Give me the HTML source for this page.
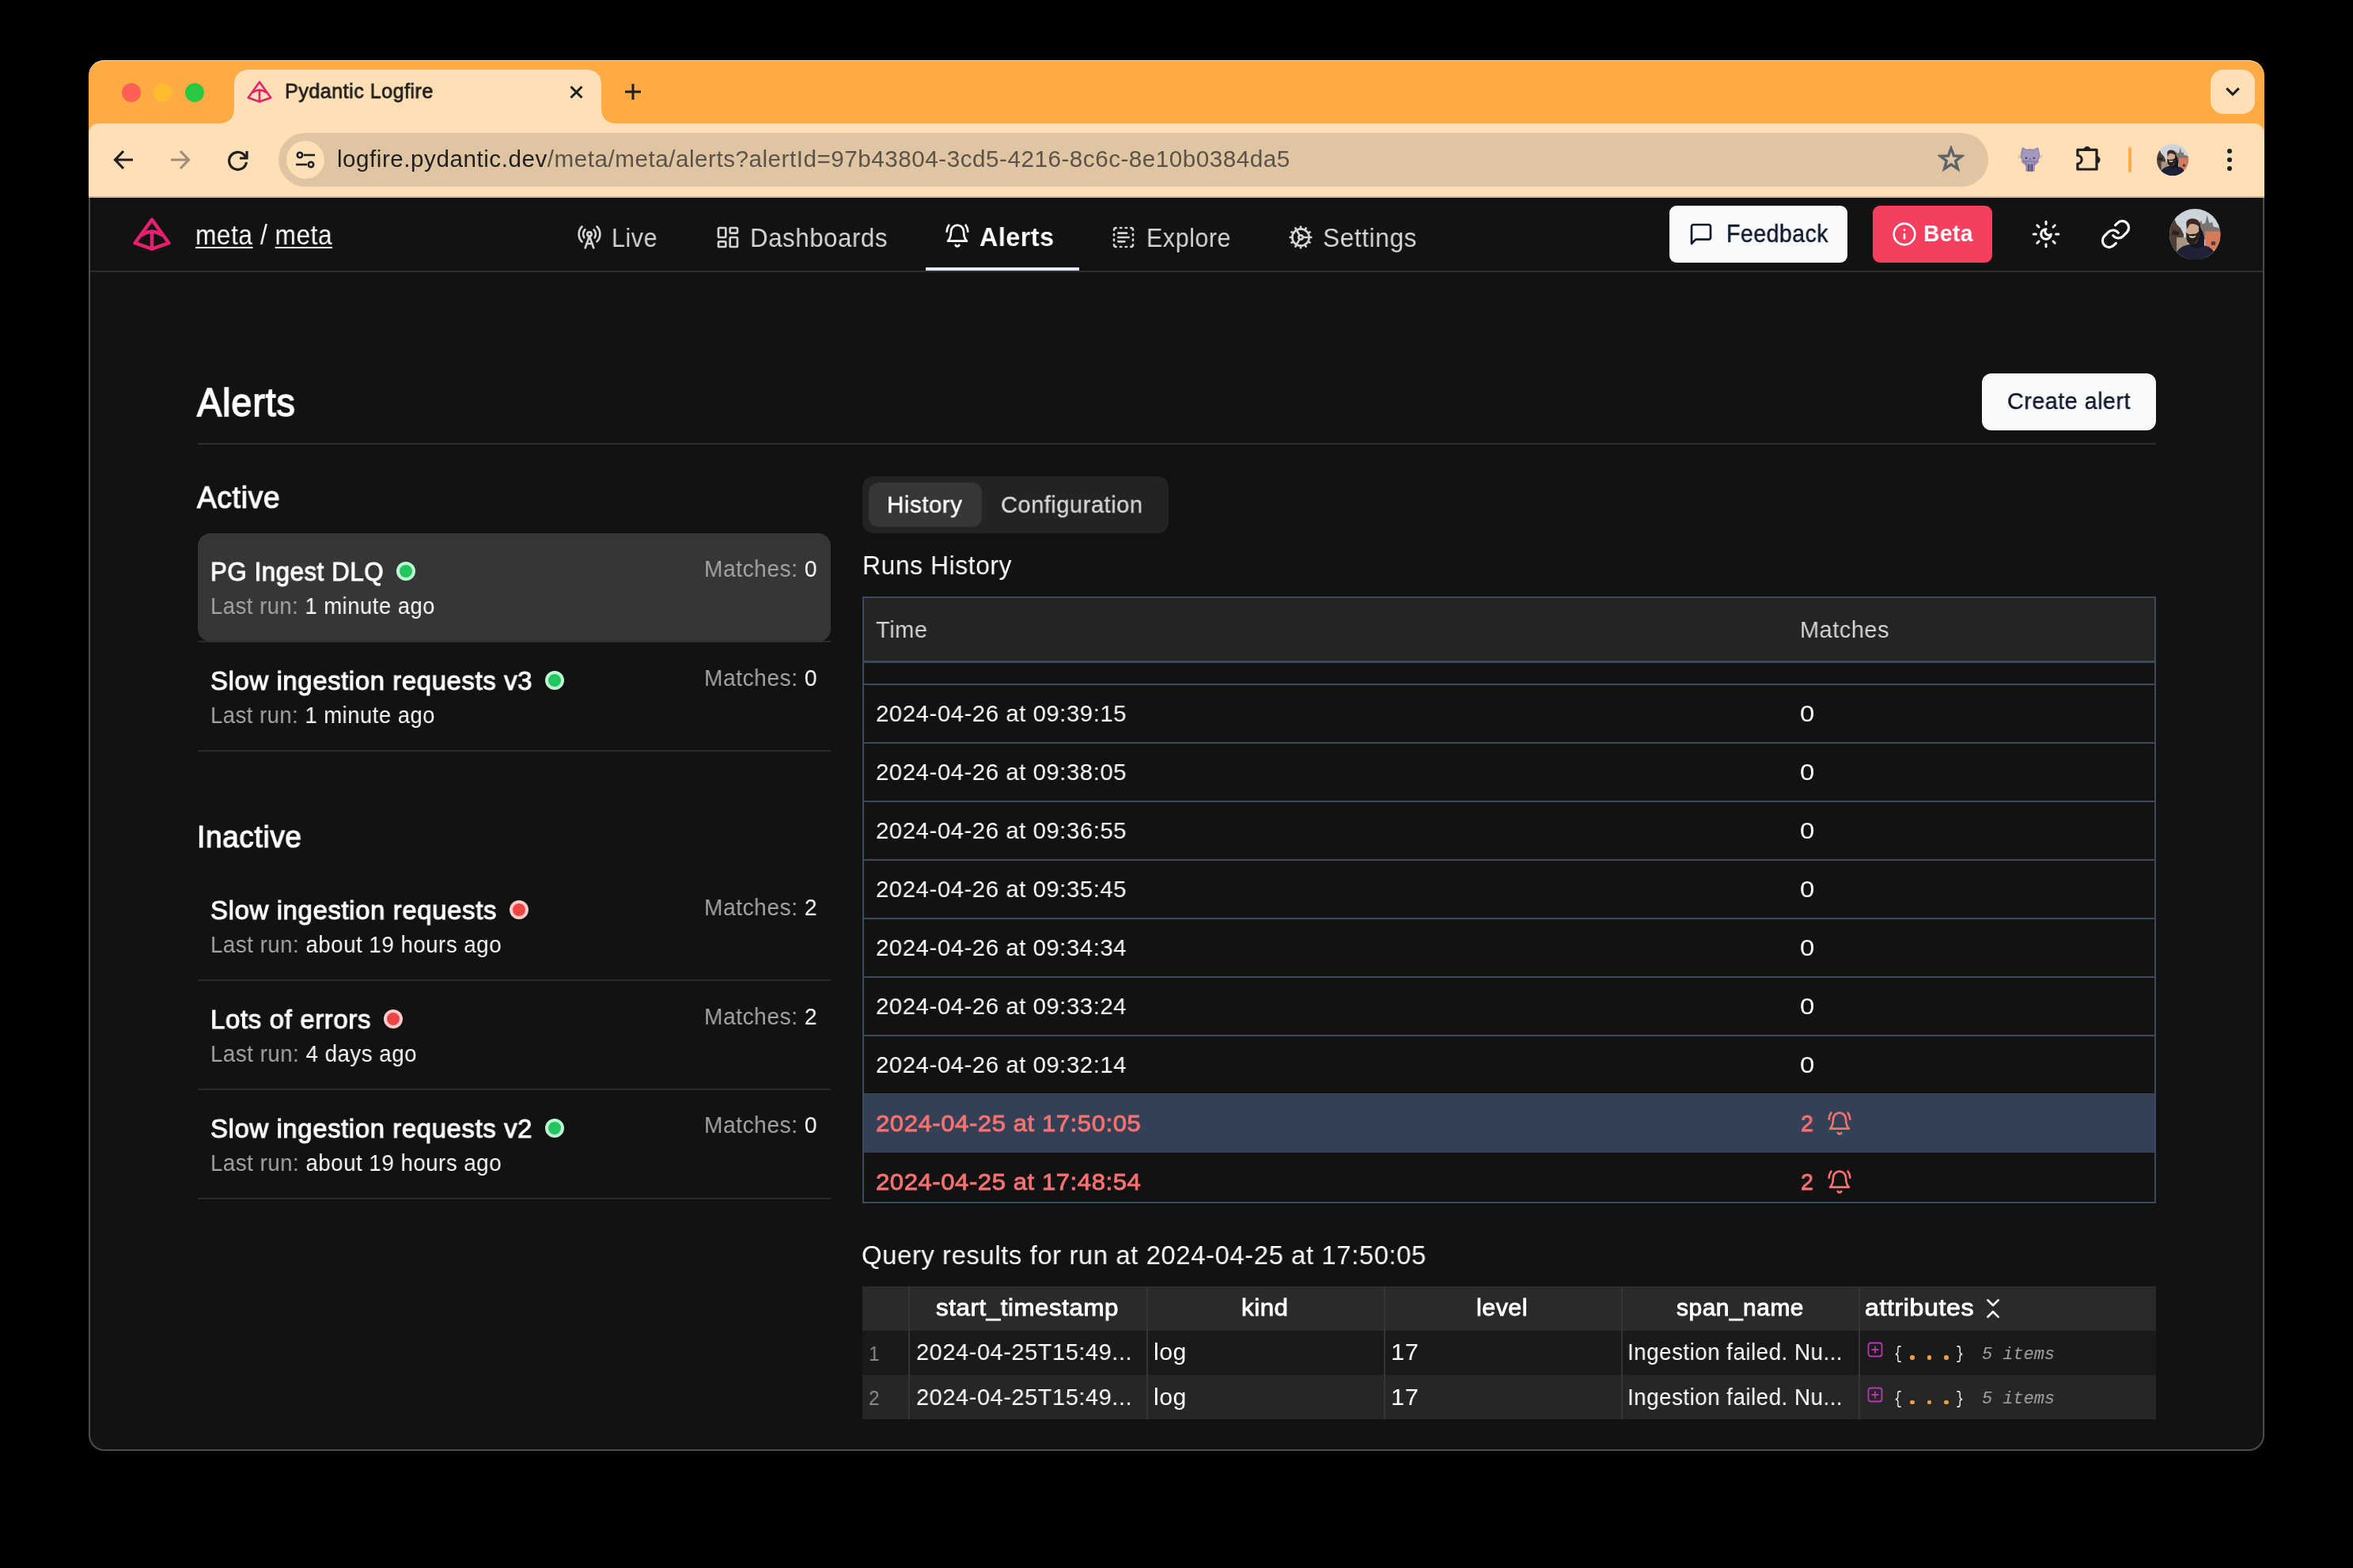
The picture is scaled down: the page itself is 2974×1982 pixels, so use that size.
<!DOCTYPE html><html><head><meta charset="utf-8"><style>
html,body{margin:0;padding:0;}
body{width:2974px;height:1982px;background:#000;position:relative;overflow:hidden;font-family:"Liberation Sans",sans-serif;}
.t{position:absolute;white-space:pre;transform-origin:0 0;will-change:transform;}
svg{display:block}
</style></head><body>
<div style="position:absolute;left:112px;top:76px;width:2750px;height:1758px;background:#121212;border-radius:20px;"></div>
<div style="position:absolute;left:112px;top:76px;width:2750px;height:100px;background:#ffab45;border-radius:20px 20px 0 0;box-shadow:inset 0 1px 0 rgba(255,225,180,0.8);"></div>
<div style="position:absolute;left:112px;top:156px;width:2750px;height:92px;background:#ffdfb6;border-radius:13px 13px 0 0;"></div>
<div style="position:absolute;left:112px;top:247.5px;width:2750px;height:2.5px;background:#cdb59b;"></div>
<svg style="position:absolute;left:276px;top:88px" width="504" height="68" viewBox="0 0 504 68"><path d="M0 68 Q20 68 20 48 L20 20 Q20 0 40 0 L464 0 Q484 0 484 20 L484 48 Q484 68 504 68 Z" fill="#ffdfb6"/></svg>
<div style="position:absolute;left:154px;top:105px;width:24px;height:24px;background:#ff5f57;border-radius:50%;"></div>
<div style="position:absolute;left:194px;top:105px;width:24px;height:24px;background:#febc2e;border-radius:50%;"></div>
<div style="position:absolute;left:234px;top:105px;width:24px;height:24px;background:#28c840;border-radius:50%;"></div>
<svg style="position:absolute;left:312px;top:102px;" width="32" height="28" viewBox="0 0 48 42"><g fill="none" stroke="#e5206f" stroke-width="3.9" stroke-linejoin="round" stroke-linecap="round"><path d="M24 2.6 L2.6 32.2 L24 39.6 L45.4 32.2 Z"/><path d="M11.5 21.8 Q24 13.8 36.5 21.8"/><path d="M24 17.8 L24 39.6"/></g></svg>
<div class="t" style="left:359.5px;top:102.42px;font-size:26.20px;line-height:26.20px;color:#1f1f1f;font-weight:400;font-family:'Liberation Sans', sans-serif;transform:scaleX(0.9618);-webkit-text-stroke:0.79px #1f1f1f;letter-spacing:0.47px;">Pydantic Logfire</div>
<svg style="position:absolute;left:719.5px;top:108px;" width="17" height="17" viewBox="0 0 17 17"><path d="M1.5 1.5 L15.5 15.5 M15.5 1.5 L1.5 15.5" stroke="#1f1f1f" stroke-width="3" stroke-linecap="butt"/></svg>
<svg style="position:absolute;left:790px;top:106px;" width="20" height="20" viewBox="0 0 20 20"><path d="M10 0 V20 M0 10 H20" stroke="#1f1f1f" stroke-width="3"/></svg>
<div style="position:absolute;left:2794px;top:88px;width:56px;height:56px;background:#ffdfb6;border-radius:16px;"></div>
<svg style="position:absolute;left:2810px;top:108px;" width="24" height="16" viewBox="0 0 24 16"><path d="M4.3 3.6 L12 11.3 L19.7 3.6" fill="none" stroke="#1f1f1f" stroke-width="3"/></svg>
<svg style="position:absolute;left:142px;top:188px;" width="28" height="28" viewBox="0 0 28 28"><path d="M26 14 H4 M14 3 L3.5 14 L14 25" fill="none" stroke="#1f1f1f" stroke-width="3.2"/></svg>
<svg style="position:absolute;left:214px;top:188px;" width="28" height="28" viewBox="0 0 28 28"><path d="M2 14 H24 M14 3 L24.5 14 L14 25" fill="none" stroke="#9e8d7a" stroke-width="3.2"/></svg>
<svg style="position:absolute;left:286px;top:188px;" width="30" height="30" viewBox="0 0 30 30"><path d="M24.5 10.5 A11 11 0 1 0 25.5 17" fill="none" stroke="#1f1f1f" stroke-width="3.2"/><path d="M26 3 V12 H17" fill="none" stroke="#1f1f1f" stroke-width="3.2"/></svg>
<div style="position:absolute;left:352px;top:168px;width:2161px;height:68px;background:#e0c5a3;border-radius:34px;"></div>
<div style="position:absolute;left:362px;top:178px;width:48px;height:48px;background:#ffdfb6;border-radius:50%;"></div>
<svg style="position:absolute;left:372px;top:188px;" width="28" height="28" viewBox="0 0 28 28"><g fill="none" stroke="#1f1f1f" stroke-width="2.6"><circle cx="7" cy="8" r="3.2"/><path d="M12 8 H26"/><circle cx="21" cy="20" r="3.2"/><path d="M2 20 H16"/></g></svg>
<div class="t" style="left:425.5px;top:187.45px;font-size:29.00px;line-height:29.00px;color:#5b5249;font-weight:400;font-family:'Liberation Sans', sans-serif;transform:scaleX(1.0210);letter-spacing:0.52px;"><span style="color:#1f1f1f">logfire.pydantic.dev</span>/meta/meta/alerts?alertId=97b43804-3cd5-4216-8c6c-8e10b0384da5</div>
<svg style="position:absolute;left:2449px;top:184px;" width="34" height="34" viewBox="0 0 34 34"><path d="M17 3.5 L20.6 13 L30.5 13.3 L22.7 19.5 L25.5 29.5 L17 23.8 L8.5 29.5 L11.3 19.5 L3.5 13.3 L13.4 13 Z" fill="none" stroke="#5f6368" stroke-width="3.4" stroke-linejoin="miter"/></svg>
<svg style="position:absolute;left:2550px;top:183px;" width="34" height="36" viewBox="0 0 34 36"><g stroke="#6f5f9c" stroke-width="0.7" fill="#a197bf"><path d="M4.6 11 L6.2 3.8 L11.5 6.2 Q16 5.2 20.5 6.2 L25.8 3.8 L27.4 11 Q29 17 24.5 20.8 Q16 23.8 7.5 20.8 Q3 17 4.6 11 Z"/><path d="M11.2 23 L6.5 19.8 L5.2 21.5 L11.5 26.5 Z"/><path d="M20.8 23 L25.5 19.8 L26.8 21.5 L20.5 26.5 Z"/><path d="M10.8 21 H21.2 L21 32.8 Q20 34 18.6 33.2 Q17.5 34.2 16 33.4 Q14.5 34.2 13.4 33.2 Q12 34 11 32.8 Z"/></g><g fill="#2a2540"><rect x="13.2" y="24.5" width="1.1" height="8.5"/><rect x="15.45" y="24.5" width="1.1" height="8.5" fill="#555068"/><rect x="17.7" y="24.5" width="1.1" height="8.5"/><circle cx="11" cy="16.8" r="1.1"/><circle cx="20.8" cy="16.8" r="1.1"/></g><circle cx="16" cy="18" r="1" fill="#7a5a8a"/><path d="M0.5 13.8 L4.5 14.6 M0.8 16.6 L4.5 15.6 M31.5 13.8 L27.5 14.6 M31.2 16.6 L27.5 15.6" stroke="#b9a88e" stroke-width="0.9"/></svg>
<svg style="position:absolute;left:2622px;top:182px;" width="36" height="36" viewBox="0 0 36 36"><path d="M3.9 7.3 H28 V32 H3.9 V25 A5.25 5.25 0 0 0 3.9 14.5 Z" fill="none" stroke="#1f1f1f" stroke-width="3.2" stroke-linejoin="round"/><path d="M11.6 7.3 A4.4 4.4 0 0 1 20.4 7.3 Z" fill="#1f1f1f"/><path d="M28 15.4 A4.6 4.6 0 0 1 28 24.6 Z" fill="#1f1f1f"/></svg>
<div style="position:absolute;left:2690px;top:186px;width:4px;height:32px;background:#ffab45;border-radius:2px;"></div>
<svg style="position:absolute;left:2726.0px;top:182.0px;" width="40" height="40" viewBox="0 0 100 100"><defs><clipPath id="ca"><circle cx="50" cy="50" r="50"/></clipPath></defs>
<g clip-path="url(#ca)">
<rect width="100" height="100" fill="#cdd3db"/>
<path d="M55 48 L58 30 L62 22 L64 30 L70 28 L74 12 L78 28 L84 26 L86 35 L100 38 L100 60 L55 60 Z" fill="#7b7470"/>
<rect x="70" y="44" width="32" height="38" fill="#d47b5c"/>
<rect x="82" y="64" width="8" height="7" fill="#4a3a36"/>
<rect x="70" y="80" width="30" height="22" fill="#c9b39a"/>
<path d="M0 24 L8 16 L14 30 L22 38 L28 50 L24 100 L0 100 Z" fill="#4d3f36"/>
<path d="M6 42 L20 45 L18 52 L4 50 Z" fill="#2b2320"/>
<rect x="14" y="56" width="22" height="36" fill="#a89580"/>
<ellipse cx="45" cy="44" rx="12.5" ry="17" fill="#d1ab8c"/>
<path d="M33 26 Q38 16 52 20 Q62 24 61 40 L58 36 Q52 28 40 30 L34 40 Z" fill="#3a2a22"/>
<path d="M33 46 L38 50 L52 49 L58 44 L58 58 Q50 72 40 70 Q33 64 33 54 Z" fill="#2a201b"/>
<path d="M38 52 Q45 56 52 52 L50 56 Q45 58 40 56 Z" fill="#f0e0d0"/>
<path d="M58 34 Q70 45 68 70 L72 100 L30 100 L36 70 Q55 72 58 56 Z" fill="#15161f"/>
<path d="M8 100 Q12 76 36 70 L50 78 L70 72 Q88 76 94 100 Z" fill="#1f2136"/>
</g></svg>
<div style="position:absolute;left:2815px;top:187.8px;width:6.4px;height:6.4px;background:#1f1f1f;border-radius:50%;"></div>
<div style="position:absolute;left:2815px;top:198.8px;width:6.4px;height:6.4px;background:#1f1f1f;border-radius:50%;"></div>
<div style="position:absolute;left:2815px;top:209.8px;width:6.4px;height:6.4px;background:#1f1f1f;border-radius:50%;"></div>
<div style="position:absolute;left:113px;top:342px;width:2748px;height:1.5px;background:#2e2e2e;"></div>
<svg style="position:absolute;left:168px;top:275px;" width="48" height="42" viewBox="0 0 48 42"><g fill="none" stroke="#e5206f" stroke-width="4.5" stroke-linejoin="round" stroke-linecap="round"><path d="M24 2.6 L2.6 32.2 L24 39.6 L45.4 32.2 Z"/><path d="M11.5 21.8 Q24 13.8 36.5 21.8"/><path d="M24 17.8 L24 39.6"/></g></svg>
<div class="t" style="left:247.0px;top:279.80px;font-size:34.50px;line-height:34.50px;color:#ffffff;font-weight:400;font-family:'Liberation Sans', sans-serif;transform:scaleX(0.9158);letter-spacing:0.62px;"><span style="text-decoration:underline;text-decoration-thickness:2px;text-underline-offset:3px">meta</span> / <span style="text-decoration:underline;text-decoration-thickness:2px;text-underline-offset:3px">meta</span></div>
<svg style="position:absolute;left:729px;top:283.5px;" width="32" height="32" viewBox="0 0 24 24"><g fill="none" stroke="#d4d4d4" stroke-width="2" stroke-linecap="round" stroke-linejoin="round"><path d="M4.9 16.1C1 12.2 1 5.8 4.9 1.9"/><path d="M7.8 4.7a6.14 6.14 0 0 0-.8 7.5"/><circle cx="12" cy="9" r="2"/><path d="M16.2 4.8c2 2 2.26 5.11.8 7.47"/><path d="M19.1 1.9a9.96 9.96 0 0 1 0 14.1"/><path d="M9.5 18h5"/><path d="m8 22 4-11 4 11"/></g></svg>
<div class="t" style="left:773.2px;top:283.77px;font-size:33.00px;line-height:33.00px;color:#d4d4d4;font-weight:400;font-family:'Liberation Sans', sans-serif;transform:scaleX(0.9227);letter-spacing:0.59px;">Live</div>
<svg style="position:absolute;left:904px;top:284px;" width="32" height="32" viewBox="0 0 24 24"><g fill="none" stroke="#d4d4d4" stroke-width="2" stroke-linecap="round" stroke-linejoin="round"><rect width="7" height="9" x="3" y="3" rx="1"/><rect width="7" height="5" x="14" y="3" rx="1"/><rect width="7" height="9" x="14" y="12" rx="1"/><rect width="7" height="5" x="3" y="16" rx="1"/></g></svg>
<div class="t" style="left:948.0px;top:283.77px;font-size:33.00px;line-height:33.00px;color:#d4d4d4;font-weight:400;font-family:'Liberation Sans', sans-serif;transform:scaleX(0.9466);letter-spacing:0.59px;">Dashboards</div>
<svg style="position:absolute;left:1194px;top:282px;" width="32" height="32" viewBox="0 0 24 24"><g fill="none" stroke="#ffffff" stroke-width="2" stroke-linecap="round" stroke-linejoin="round"><path d="M6 8a6 6 0 0 1 12 0c0 7 3 9 3 9H3s3-2 3-9"/><path d="M10.3 21a1.94 1.94 0 0 0 3.4 0"/><path d="M4 2C2.8 3.7 2 5.7 2 8"/><path d="M22 8c0-2.3-.8-4.3-2-6"/></g></svg>
<div class="t" style="left:1237.5px;top:281.62px;font-size:34.00px;line-height:34.00px;color:#ffffff;font-weight:700;font-family:'Liberation Sans', sans-serif;transform:scaleX(0.9454);letter-spacing:0.61px;">Alerts</div>
<div style="position:absolute;left:1170px;top:338px;width:194px;height:4px;background:#e2e8f0;"></div>
<svg style="position:absolute;left:1403.75px;top:284px;" width="32" height="32" viewBox="0 0 24 24"><g fill="none" stroke="#d4d4d4" stroke-width="2" stroke-linecap="round" stroke-linejoin="round"><path d="M5 3a2 2 0 0 0-2 2"/><path d="M19 3a2 2 0 0 1 2 2"/><path d="M21 19a2 2 0 0 1-2 2"/><path d="M5 21a2 2 0 0 1-2-2"/><path d="M9 3h1"/><path d="M9 21h1"/><path d="M14 3h1"/><path d="M14 21h1"/><path d="M3 9v1"/><path d="M21 9v1"/><path d="M3 14v1"/><path d="M21 14v1"/><line x1="7" x2="15" y1="8" y2="8"/><line x1="7" x2="17" y1="12" y2="12"/><line x1="7" x2="13" y1="16" y2="16"/></g></svg>
<div class="t" style="left:1448.5px;top:283.77px;font-size:33.00px;line-height:33.00px;color:#d4d4d4;font-weight:400;font-family:'Liberation Sans', sans-serif;transform:scaleX(0.9224);letter-spacing:0.59px;">Explore</div>
<svg style="position:absolute;left:1628px;top:284px;" width="32" height="32" viewBox="0 0 24 24"><g fill="none" stroke="#d4d4d4" stroke-width="2" stroke-linecap="round" stroke-linejoin="round"><path d="M12 20a8 8 0 1 0 0-16 8 8 0 0 0 0 16Z"/><path d="M12 14a2 2 0 1 0 0-4 2 2 0 0 0 0 4Z"/><path d="M12 2v2"/><path d="M12 22v-2"/><path d="m17 20.66-1-1.73"/><path d="M11 10.27 7 3.34"/><path d="m20.66 17-1.73-1"/><path d="m3.34 7 1.73 1"/><path d="M14 12h8"/><path d="M2 12h2"/><path d="m20.66 7-1.73 1"/><path d="m3.34 17 1.73-1"/><path d="m17 3.34-1 1.73"/><path d="m11 13.73-4 6.93"/></g></svg>
<div class="t" style="left:1672.1px;top:283.77px;font-size:33.00px;line-height:33.00px;color:#d4d4d4;font-weight:400;font-family:'Liberation Sans', sans-serif;transform:scaleX(0.9603);letter-spacing:0.59px;">Settings</div>
<div style="position:absolute;left:2110px;top:260px;width:225px;height:72px;background:#f8fafc;border-radius:9px;"></div>
<svg style="position:absolute;left:2133.5px;top:279.7px;" width="32" height="32" viewBox="0 0 24 24"><g fill="none" stroke="#0f172a" stroke-width="2" stroke-linecap="round" stroke-linejoin="round"><path d="M21 15a2 2 0 0 1-2 2H7l-4 4V5a2 2 0 0 1 2-2h14a2 2 0 0 1 2 2z"/></g></svg>
<div class="t" style="left:2181.5px;top:280.18px;font-size:30.50px;line-height:30.50px;color:#0f172a;font-weight:400;font-family:'Liberation Sans', sans-serif;transform:scaleX(0.9326);-webkit-text-stroke:0.43px #0f172a;letter-spacing:0.55px;">Feedback</div>
<div style="position:absolute;left:2367px;top:260px;width:151px;height:72px;background:#f43f5e;border-radius:9px;"></div>
<svg style="position:absolute;left:2391px;top:279.7px;" width="32" height="32" viewBox="0 0 24 24"><g fill="none" stroke="#ffffff" stroke-width="2" stroke-linecap="round" stroke-linejoin="round"><circle cx="12" cy="12" r="10"/><path d="M12 16v-4"/><path d="M12 8h.01"/></g></svg>
<div class="t" style="left:2430.5px;top:281.45px;font-size:29.00px;line-height:29.00px;color:#ffffff;font-weight:700;font-family:'Liberation Sans', sans-serif;transform:scaleX(0.9701);letter-spacing:0.52px;">Beta</div>
<svg style="position:absolute;left:2567px;top:277px;" width="38" height="38" viewBox="0 0 24 24"><g fill="none" stroke="#ffffff" stroke-width="1.9" stroke-linecap="round" stroke-linejoin="round"><path d="M12 8a2.83 2.83 0 0 0 4 4 4 4 0 1 1-4-4"/><path d="M12 2v2"/><path d="M12 20v2"/><path d="m4.9 4.9 1.4 1.4"/><path d="m17.7 17.7 1.4 1.4"/><path d="M2 12h2"/><path d="M20 12h2"/><path d="m6.3 17.7-1.4 1.4"/><path d="m19.1 4.9-1.4 1.4"/></g></svg>
<svg style="position:absolute;left:2654.4px;top:276px;" width="40" height="40" viewBox="0 0 24 24"><g fill="none" stroke="#ffffff" stroke-width="1.9" stroke-linecap="round" stroke-linejoin="round"><path d="M10 13a5 5 0 0 0 7.54.54l3-3a5 5 0 0 0-7.07-7.07l-1.72 1.71"/><path d="M14 11a5 5 0 0 0-7.54-.54l-3 3a5 5 0 0 0 7.07 7.07l1.71-1.71"/></g></svg>
<svg style="position:absolute;left:2742.0px;top:263.6px;" width="64.5" height="64.5" viewBox="0 0 100 100"><defs><clipPath id="cb"><circle cx="50" cy="50" r="50"/></clipPath></defs>
<g clip-path="url(#cb)">
<rect width="100" height="100" fill="#cdd3db"/>
<path d="M55 48 L58 30 L62 22 L64 30 L70 28 L74 12 L78 28 L84 26 L86 35 L100 38 L100 60 L55 60 Z" fill="#7b7470"/>
<rect x="70" y="44" width="32" height="38" fill="#d47b5c"/>
<rect x="82" y="64" width="8" height="7" fill="#4a3a36"/>
<rect x="70" y="80" width="30" height="22" fill="#c9b39a"/>
<path d="M0 24 L8 16 L14 30 L22 38 L28 50 L24 100 L0 100 Z" fill="#4d3f36"/>
<path d="M6 42 L20 45 L18 52 L4 50 Z" fill="#2b2320"/>
<rect x="14" y="56" width="22" height="36" fill="#a89580"/>
<ellipse cx="45" cy="44" rx="12.5" ry="17" fill="#d1ab8c"/>
<path d="M33 26 Q38 16 52 20 Q62 24 61 40 L58 36 Q52 28 40 30 L34 40 Z" fill="#3a2a22"/>
<path d="M33 46 L38 50 L52 49 L58 44 L58 58 Q50 72 40 70 Q33 64 33 54 Z" fill="#2a201b"/>
<path d="M38 52 Q45 56 52 52 L50 56 Q45 58 40 56 Z" fill="#f0e0d0"/>
<path d="M58 34 Q70 45 68 70 L72 100 L30 100 L36 70 Q55 72 58 56 Z" fill="#15161f"/>
<path d="M8 100 Q12 76 36 70 L50 78 L70 72 Q88 76 94 100 Z" fill="#1f2136"/>
</g></svg>
<div class="t" style="left:248.5px;top:483.70px;font-size:50.80px;line-height:50.80px;color:#ffffff;font-weight:400;font-family:'Liberation Sans', sans-serif;transform:scaleX(0.9217);-webkit-text-stroke:1.52px #ffffff;letter-spacing:0.91px;">Alerts</div>
<div style="position:absolute;left:2505px;top:472px;width:220px;height:72px;background:#f8fafc;border-radius:12px;"></div>
<div class="t" style="left:2536.5px;top:493.45px;font-size:29.00px;line-height:29.00px;color:#0f172a;font-weight:400;font-family:'Liberation Sans', sans-serif;transform:scaleX(0.9888);-webkit-text-stroke:0.41px #0f172a;letter-spacing:0.52px;">Create alert</div>
<div style="position:absolute;left:250px;top:560px;width:2475px;height:2px;background:#2e2e2e;"></div>
<div class="t" style="left:248.5px;top:610.41px;font-size:38.50px;line-height:38.50px;color:#ffffff;font-weight:400;font-family:'Liberation Sans', sans-serif;transform:scaleX(0.9649);-webkit-text-stroke:1.16px #ffffff;letter-spacing:0.69px;">Active</div>
<div style="position:absolute;left:250px;top:674px;width:800px;height:136.5px;background:#363636;border-radius:16px;"></div>
<div class="t" style="left:265.5px;top:705.22px;font-size:34.00px;line-height:34.00px;color:#ffffff;font-weight:400;font-family:'Liberation Sans', sans-serif;transform:scaleX(0.9185);-webkit-text-stroke:1.02px #ffffff;letter-spacing:0.61px;">PG Ingest DLQ</div>
<div style="position:absolute;left:501px;top:710px;width:24px;height:24px;background:#22c55e;border-radius:50%;box-sizing:border-box;border:4px solid #bbf7d0;"></div>
<div class="t" style="left:265.5px;top:751.20px;font-size:29.30px;line-height:29.30px;color:#a3a3a3;font-weight:400;font-family:'Liberation Sans', sans-serif;transform:scaleX(0.9368);letter-spacing:0.53px;">Last run: <span style="color:#fafafa">1 minute ago</span></div>
<div class="t" style="left:889.5px;top:703.70px;font-size:29.30px;line-height:29.30px;color:#a3a3a3;font-weight:400;font-family:'Liberation Sans', sans-serif;transform:scaleX(0.9625);letter-spacing:0.53px;">Matches: <span style="color:#ffffff">0</span></div>
<div class="t" style="left:265.5px;top:843.22px;font-size:34.00px;line-height:34.00px;color:#ffffff;font-weight:400;font-family:'Liberation Sans', sans-serif;transform:scaleX(0.9684);-webkit-text-stroke:1.02px #ffffff;letter-spacing:0.61px;">Slow ingestion requests v3</div>
<div style="position:absolute;left:689.25px;top:848px;width:24px;height:24px;background:#22c55e;border-radius:50%;box-sizing:border-box;border:4px solid #bbf7d0;"></div>
<div class="t" style="left:265.5px;top:889.20px;font-size:29.30px;line-height:29.30px;color:#a3a3a3;font-weight:400;font-family:'Liberation Sans', sans-serif;transform:scaleX(0.9368);letter-spacing:0.53px;">Last run: <span style="color:#fafafa">1 minute ago</span></div>
<div class="t" style="left:889.5px;top:841.70px;font-size:29.30px;line-height:29.30px;color:#a3a3a3;font-weight:400;font-family:'Liberation Sans', sans-serif;transform:scaleX(0.9625);letter-spacing:0.53px;">Matches: <span style="color:#ffffff">0</span></div>
<div class="t" style="left:265.5px;top:1133.22px;font-size:34.00px;line-height:34.00px;color:#ffffff;font-weight:400;font-family:'Liberation Sans', sans-serif;transform:scaleX(0.9703);-webkit-text-stroke:1.02px #ffffff;letter-spacing:0.61px;">Slow ingestion requests</div>
<div style="position:absolute;left:643.8px;top:1138px;width:24px;height:24px;background:#ef4444;border-radius:50%;box-sizing:border-box;border:4px solid #fecaca;"></div>
<div class="t" style="left:265.5px;top:1179.20px;font-size:29.30px;line-height:29.30px;color:#a3a3a3;font-weight:400;font-family:'Liberation Sans', sans-serif;transform:scaleX(0.9450);letter-spacing:0.53px;">Last run: <span style="color:#fafafa">about 19 hours ago</span></div>
<div class="t" style="left:889.5px;top:1131.70px;font-size:29.30px;line-height:29.30px;color:#a3a3a3;font-weight:400;font-family:'Liberation Sans', sans-serif;transform:scaleX(0.9625);letter-spacing:0.53px;">Matches: <span style="color:#ffffff">2</span></div>
<div class="t" style="left:265.5px;top:1271.22px;font-size:34.00px;line-height:34.00px;color:#ffffff;font-weight:400;font-family:'Liberation Sans', sans-serif;transform:scaleX(0.9724);-webkit-text-stroke:1.02px #ffffff;letter-spacing:0.61px;">Lots of errors</div>
<div style="position:absolute;left:485px;top:1276px;width:24px;height:24px;background:#ef4444;border-radius:50%;box-sizing:border-box;border:4px solid #fecaca;"></div>
<div class="t" style="left:265.5px;top:1317.20px;font-size:29.30px;line-height:29.30px;color:#a3a3a3;font-weight:400;font-family:'Liberation Sans', sans-serif;transform:scaleX(0.9455);letter-spacing:0.53px;">Last run: <span style="color:#fafafa">4 days ago</span></div>
<div class="t" style="left:889.5px;top:1269.70px;font-size:29.30px;line-height:29.30px;color:#a3a3a3;font-weight:400;font-family:'Liberation Sans', sans-serif;transform:scaleX(0.9625);letter-spacing:0.53px;">Matches: <span style="color:#ffffff">2</span></div>
<div class="t" style="left:265.5px;top:1408.72px;font-size:34.00px;line-height:34.00px;color:#ffffff;font-weight:400;font-family:'Liberation Sans', sans-serif;transform:scaleX(0.9684);-webkit-text-stroke:1.02px #ffffff;letter-spacing:0.61px;">Slow ingestion requests v2</div>
<div style="position:absolute;left:689.25px;top:1413.5px;width:24px;height:24px;background:#22c55e;border-radius:50%;box-sizing:border-box;border:4px solid #bbf7d0;"></div>
<div class="t" style="left:265.5px;top:1454.70px;font-size:29.30px;line-height:29.30px;color:#a3a3a3;font-weight:400;font-family:'Liberation Sans', sans-serif;transform:scaleX(0.9450);letter-spacing:0.53px;">Last run: <span style="color:#fafafa">about 19 hours ago</span></div>
<div class="t" style="left:889.5px;top:1407.20px;font-size:29.30px;line-height:29.30px;color:#a3a3a3;font-weight:400;font-family:'Liberation Sans', sans-serif;transform:scaleX(0.9625);letter-spacing:0.53px;">Matches: <span style="color:#ffffff">0</span></div>
<div style="position:absolute;left:250px;top:810.0px;width:800px;height:1.5px;background:#2b2b2b;"></div>
<div style="position:absolute;left:250px;top:948.0px;width:800px;height:1.5px;background:#2b2b2b;"></div>
<div style="position:absolute;left:250px;top:1238.3px;width:800px;height:1.5px;background:#2b2b2b;"></div>
<div style="position:absolute;left:250px;top:1376.0px;width:800px;height:1.5px;background:#2b2b2b;"></div>
<div style="position:absolute;left:250px;top:1514.3px;width:800px;height:1.5px;background:#2b2b2b;"></div>
<div class="t" style="left:249.0px;top:1039.01px;font-size:38.50px;line-height:38.50px;color:#ffffff;font-weight:400;font-family:'Liberation Sans', sans-serif;transform:scaleX(0.9598);-webkit-text-stroke:1.16px #ffffff;letter-spacing:0.69px;">Inactive</div>
<div style="position:absolute;left:1090px;top:602px;width:387px;height:72px;background:#232323;border-radius:14px;"></div>
<div style="position:absolute;left:1098px;top:610px;width:143px;height:56px;background:#363636;border-radius:12px;"></div>
<div class="t" style="left:1121.0px;top:622.77px;font-size:29.80px;line-height:29.80px;color:#ffffff;font-weight:400;font-family:'Liberation Sans', sans-serif;transform:scaleX(0.9902);-webkit-text-stroke:0.42px #ffffff;letter-spacing:0.54px;">History</div>
<div class="t" style="left:1265.1px;top:622.77px;font-size:29.80px;line-height:29.80px;color:#d4d4d4;font-weight:400;font-family:'Liberation Sans', sans-serif;transform:scaleX(0.9739);-webkit-text-stroke:0.42px #d4d4d4;letter-spacing:0.54px;">Configuration</div>
<div class="t" style="left:1089.5px;top:698.33px;font-size:33.40px;line-height:33.40px;color:#ffffff;font-weight:400;font-family:'Liberation Sans', sans-serif;transform:scaleX(0.9531);letter-spacing:0.60px;">Runs History</div>
<div style="position:absolute;left:1090px;top:754px;width:1635px;height:767px;box-sizing:border-box;border:2px solid #3c4a5e;overflow:hidden;">
<div style="position:absolute;left:0px;top:108px;width:1631px;height:2px;background:#3c4a5e;"></div>
<div class="t" style="left:15.1px;top:57.37px;font-size:29.80px;line-height:29.80px;color:#ffffff;font-weight:400;font-family:'Liberation Sans', sans-serif;transform:scaleX(0.9856);letter-spacing:0.54px;">2024-04-26 at 09:40:25</div>
<div class="t" style="left:1183.2px;top:57.37px;font-size:29.80px;line-height:29.80px;color:#ffffff;font-weight:400;font-family:'Liberation Sans', sans-serif;transform:scaleX(1.1071);letter-spacing:0.54px;">0</div>
<div style="position:absolute;left:0px;top:182px;width:1631px;height:2px;background:#3c4a5e;"></div>
<div class="t" style="left:15.1px;top:130.77px;font-size:29.80px;line-height:29.80px;color:#ffffff;font-weight:400;font-family:'Liberation Sans', sans-serif;transform:scaleX(0.9856);letter-spacing:0.54px;">2024-04-26 at 09:39:15</div>
<div class="t" style="left:1183.2px;top:130.77px;font-size:29.80px;line-height:29.80px;color:#ffffff;font-weight:400;font-family:'Liberation Sans', sans-serif;transform:scaleX(1.1071);letter-spacing:0.54px;">0</div>
<div style="position:absolute;left:0px;top:256px;width:1631px;height:2px;background:#3c4a5e;"></div>
<div class="t" style="left:15.1px;top:204.77px;font-size:29.80px;line-height:29.80px;color:#ffffff;font-weight:400;font-family:'Liberation Sans', sans-serif;transform:scaleX(0.9856);letter-spacing:0.54px;">2024-04-26 at 09:38:05</div>
<div class="t" style="left:1183.2px;top:204.77px;font-size:29.80px;line-height:29.80px;color:#ffffff;font-weight:400;font-family:'Liberation Sans', sans-serif;transform:scaleX(1.1071);letter-spacing:0.54px;">0</div>
<div style="position:absolute;left:0px;top:330px;width:1631px;height:2px;background:#3c4a5e;"></div>
<div class="t" style="left:15.1px;top:278.77px;font-size:29.80px;line-height:29.80px;color:#ffffff;font-weight:400;font-family:'Liberation Sans', sans-serif;transform:scaleX(0.9856);letter-spacing:0.54px;">2024-04-26 at 09:36:55</div>
<div class="t" style="left:1183.2px;top:278.77px;font-size:29.80px;line-height:29.80px;color:#ffffff;font-weight:400;font-family:'Liberation Sans', sans-serif;transform:scaleX(1.1071);letter-spacing:0.54px;">0</div>
<div style="position:absolute;left:0px;top:404px;width:1631px;height:2px;background:#3c4a5e;"></div>
<div class="t" style="left:15.1px;top:352.77px;font-size:29.80px;line-height:29.80px;color:#ffffff;font-weight:400;font-family:'Liberation Sans', sans-serif;transform:scaleX(0.9856);letter-spacing:0.54px;">2024-04-26 at 09:35:45</div>
<div class="t" style="left:1183.2px;top:352.77px;font-size:29.80px;line-height:29.80px;color:#ffffff;font-weight:400;font-family:'Liberation Sans', sans-serif;transform:scaleX(1.1071);letter-spacing:0.54px;">0</div>
<div style="position:absolute;left:0px;top:478px;width:1631px;height:2px;background:#3c4a5e;"></div>
<div class="t" style="left:15.1px;top:426.77px;font-size:29.80px;line-height:29.80px;color:#ffffff;font-weight:400;font-family:'Liberation Sans', sans-serif;transform:scaleX(0.9856);letter-spacing:0.54px;">2024-04-26 at 09:34:34</div>
<div class="t" style="left:1183.2px;top:426.77px;font-size:29.80px;line-height:29.80px;color:#ffffff;font-weight:400;font-family:'Liberation Sans', sans-serif;transform:scaleX(1.1071);letter-spacing:0.54px;">0</div>
<div style="position:absolute;left:0px;top:552px;width:1631px;height:2px;background:#3c4a5e;"></div>
<div class="t" style="left:15.1px;top:500.77px;font-size:29.80px;line-height:29.80px;color:#ffffff;font-weight:400;font-family:'Liberation Sans', sans-serif;transform:scaleX(0.9856);letter-spacing:0.54px;">2024-04-26 at 09:33:24</div>
<div class="t" style="left:1183.2px;top:500.77px;font-size:29.80px;line-height:29.80px;color:#ffffff;font-weight:400;font-family:'Liberation Sans', sans-serif;transform:scaleX(1.1071);letter-spacing:0.54px;">0</div>
<div style="position:absolute;left:0px;top:626px;width:1631px;height:2px;background:#3c4a5e;"></div>
<div class="t" style="left:15.1px;top:574.77px;font-size:29.80px;line-height:29.80px;color:#ffffff;font-weight:400;font-family:'Liberation Sans', sans-serif;transform:scaleX(0.9856);letter-spacing:0.54px;">2024-04-26 at 09:32:14</div>
<div class="t" style="left:1183.2px;top:574.77px;font-size:29.80px;line-height:29.80px;color:#ffffff;font-weight:400;font-family:'Liberation Sans', sans-serif;transform:scaleX(1.1071);letter-spacing:0.54px;">0</div>
<div style="position:absolute;left:0px;top:627px;width:1631px;height:74px;background:#344055;"></div>
<div class="t" style="left:15.1px;top:648.77px;font-size:29.80px;line-height:29.80px;color:#f87171;font-weight:400;font-family:'Liberation Sans', sans-serif;transform:scaleX(1.0424);-webkit-text-stroke:0.89px #f87171;letter-spacing:0.54px;">2024-04-25 at 17:50:05</div>
<div class="t" style="left:1183.5px;top:648.77px;font-size:29.80px;line-height:29.80px;color:#f87171;font-weight:400;font-family:'Liberation Sans', sans-serif;transform:scaleX(0.9594);-webkit-text-stroke:0.89px #f87171;letter-spacing:0.54px;">2</div>
<svg style="position:absolute;left:1217px;top:648px;" width="32" height="32" viewBox="0 0 24 24"><g fill="none" stroke="#f87171" stroke-width="2" stroke-linecap="round" stroke-linejoin="round"><path d="M6 8a6 6 0 0 1 12 0c0 7 3 9 3 9H3s3-2 3-9"/><path d="M10.3 21a1.94 1.94 0 0 0 3.4 0"/><path d="M4 2C2.8 3.7 2 5.7 2 8"/><path d="M22 8c0-2.3-.8-4.3-2-6"/></g></svg>
<div class="t" style="left:15.1px;top:722.77px;font-size:29.80px;line-height:29.80px;color:#f87171;font-weight:400;font-family:'Liberation Sans', sans-serif;transform:scaleX(1.0424);-webkit-text-stroke:0.89px #f87171;letter-spacing:0.54px;">2024-04-25 at 17:48:54</div>
<div class="t" style="left:1183.5px;top:722.77px;font-size:29.80px;line-height:29.80px;color:#f87171;font-weight:400;font-family:'Liberation Sans', sans-serif;transform:scaleX(0.9594);-webkit-text-stroke:0.89px #f87171;letter-spacing:0.54px;">2</div>
<svg style="position:absolute;left:1217px;top:722px;" width="32" height="32" viewBox="0 0 24 24"><g fill="none" stroke="#f87171" stroke-width="2" stroke-linecap="round" stroke-linejoin="round"><path d="M6 8a6 6 0 0 1 12 0c0 7 3 9 3 9H3s3-2 3-9"/><path d="M10.3 21a1.94 1.94 0 0 0 3.4 0"/><path d="M4 2C2.8 3.7 2 5.7 2 8"/><path d="M22 8c0-2.3-.8-4.3-2-6"/></g></svg>
<div style="position:absolute;left:0px;top:0px;width:1631px;height:80px;background:#242424;"></div>
<div style="position:absolute;left:0px;top:79px;width:1631px;height:3px;background:#3c4a5e;"></div>
<div class="t" style="left:15.1px;top:24.77px;font-size:29.80px;line-height:29.80px;color:#d4d4d4;font-weight:400;font-family:'Liberation Sans', sans-serif;transform:scaleX(0.9727);letter-spacing:0.54px;">Time</div>
<div class="t" style="left:1183.2px;top:24.77px;font-size:29.80px;line-height:29.80px;color:#d4d4d4;font-weight:400;font-family:'Liberation Sans', sans-serif;transform:scaleX(0.9712);letter-spacing:0.54px;">Matches</div>
</div>
<div class="t" style="left:1088.5px;top:1570.47px;font-size:33.00px;line-height:33.00px;color:#ffffff;font-weight:400;font-family:'Liberation Sans', sans-serif;transform:scaleX(0.9950);letter-spacing:0.59px;">Query results for run at 2024-04-25 at 17:50:05</div>
<div style="position:absolute;left:1090px;top:1626px;width:1635px;height:56px;background:#2a2a2a;"></div>
<div style="position:absolute;left:1090px;top:1682px;width:1635px;height:56px;background:#1a1a1a;"></div>
<div style="position:absolute;left:1090px;top:1738px;width:1635px;height:56px;background:#262626;"></div>
<div style="position:absolute;left:1148px;top:1626px;width:2px;height:168px;background:#353535;"></div>
<div style="position:absolute;left:1448.5px;top:1626px;width:2px;height:168px;background:#353535;"></div>
<div style="position:absolute;left:1749px;top:1626px;width:2px;height:168px;background:#353535;"></div>
<div style="position:absolute;left:2049px;top:1626px;width:2px;height:168px;background:#353535;"></div>
<div style="position:absolute;left:2349px;top:1626px;width:2px;height:168px;background:#353535;"></div>
<div class="t" style="left:1183.3px;top:1639.25px;font-size:29.00px;line-height:29.00px;color:#ffffff;font-weight:400;font-family:'Liberation Sans', sans-serif;transform:scaleX(1.0791);-webkit-text-stroke:0.87px #ffffff;letter-spacing:0.52px;">start_timestamp</div>
<div class="t" style="left:1569.2px;top:1639.25px;font-size:29.00px;line-height:29.00px;color:#ffffff;font-weight:400;font-family:'Liberation Sans', sans-serif;transform:scaleX(1.0773);-webkit-text-stroke:0.87px #ffffff;letter-spacing:0.52px;">kind</div>
<div class="t" style="left:1866.0px;top:1639.25px;font-size:29.00px;line-height:29.00px;color:#ffffff;font-weight:400;font-family:'Liberation Sans', sans-serif;transform:scaleX(1.0449);-webkit-text-stroke:0.87px #ffffff;letter-spacing:0.52px;">level</div>
<div class="t" style="left:2118.5px;top:1639.25px;font-size:29.00px;line-height:29.00px;color:#ffffff;font-weight:400;font-family:'Liberation Sans', sans-serif;transform:scaleX(1.0306);-webkit-text-stroke:0.87px #ffffff;letter-spacing:0.52px;">span_name</div>
<div class="t" style="left:2356.5px;top:1639.25px;font-size:29.00px;line-height:29.00px;color:#ffffff;font-weight:400;font-family:'Liberation Sans', sans-serif;transform:scaleX(1.1090);-webkit-text-stroke:0.87px #ffffff;letter-spacing:0.52px;">attributes</div>
<svg style="position:absolute;left:2502.75px;top:1638px;" width="32" height="32" viewBox="0 0 24 24"><g fill="none" stroke="#ffffff" stroke-width="2" stroke-linecap="round" stroke-linejoin="round"><path d="m7 20 5-5 5 5"/><path d="m7 4 5 5 5-5"/></g></svg>
<div class="t" style="left:1097.5px;top:1698.54px;font-size:25.00px;line-height:25.00px;color:#8a8a8a;font-weight:400;font-family:'Liberation Sans', sans-serif;transform:scaleX(0.9710);letter-spacing:0.45px;">1</div>
<div class="t" style="left:1158.1px;top:1694.47px;font-size:29.80px;line-height:29.80px;color:#ffffff;font-weight:400;font-family:'Liberation Sans', sans-serif;transform:scaleX(0.9742);letter-spacing:0.54px;">2024-04-25T15:49...</div>
<div class="t" style="left:1457.5px;top:1694.47px;font-size:29.80px;line-height:29.80px;color:#ffffff;font-weight:400;font-family:'Liberation Sans', sans-serif;transform:scaleX(1.0139);letter-spacing:0.54px;">log</div>
<div class="t" style="left:1757.5px;top:1694.47px;font-size:29.80px;line-height:29.80px;color:#ffffff;font-weight:400;font-family:'Liberation Sans', sans-serif;transform:scaleX(1.0321);letter-spacing:0.54px;">17</div>
<div class="t" style="left:2057.2px;top:1694.47px;font-size:29.80px;line-height:29.80px;color:#ffffff;font-weight:400;font-family:'Liberation Sans', sans-serif;transform:scaleX(0.9306);letter-spacing:0.54px;">Ingestion failed. Nu...</div>
<svg style="position:absolute;left:2360px;top:1696.2px;" width="20" height="20" viewBox="0 0 20 20"><rect x="1.5" y="1.5" width="17" height="17" rx="3" fill="none" stroke="#bb36b2" stroke-width="1.8"/><path d="M10 5.5 V14.5 M5.5 10 H14.5" stroke="#bb36b2" stroke-width="1.8"/></svg>
<div class="t" style="left:2394.0px;top:1701.08px;font-size:22.00px;line-height:22.00px;color:#ffffff;font-weight:400;font-family:'Liberation Mono', monospace;transform:scaleX(0.7575);letter-spacing:0.00px;font-style:normal;">{</div>
<div style="position:absolute;left:2414.2px;top:1713.2px;width:5.6px;height:5.6px;background:#f2a03d;border-radius:50%;"></div>
<div style="position:absolute;left:2435.7px;top:1713.2px;width:5.6px;height:5.6px;background:#f2a03d;border-radius:50%;"></div>
<div style="position:absolute;left:2457.2px;top:1713.2px;width:5.6px;height:5.6px;background:#f2a03d;border-radius:50%;"></div>
<div class="t" style="left:2472.0px;top:1701.08px;font-size:22.00px;line-height:22.00px;color:#ffffff;font-weight:400;font-family:'Liberation Mono', monospace;transform:scaleX(0.7575);letter-spacing:0.00px;font-style:normal;">}</div>
<div class="t" style="left:2505.0px;top:1700.65px;font-size:22.50px;line-height:22.50px;color:#a3a3a3;font-weight:400;font-family:'Liberation Mono', monospace;transform:scaleX(0.9734);letter-spacing:0.00px;font-style:italic;">5 items</div>
<div class="t" style="left:1097.5px;top:1755.24px;font-size:25.00px;line-height:25.00px;color:#8a8a8a;font-weight:400;font-family:'Liberation Sans', sans-serif;transform:scaleX(0.9710);letter-spacing:0.45px;">2</div>
<div class="t" style="left:1158.1px;top:1751.17px;font-size:29.80px;line-height:29.80px;color:#ffffff;font-weight:400;font-family:'Liberation Sans', sans-serif;transform:scaleX(0.9742);letter-spacing:0.54px;">2024-04-25T15:49...</div>
<div class="t" style="left:1457.5px;top:1751.17px;font-size:29.80px;line-height:29.80px;color:#ffffff;font-weight:400;font-family:'Liberation Sans', sans-serif;transform:scaleX(1.0139);letter-spacing:0.54px;">log</div>
<div class="t" style="left:1757.5px;top:1751.17px;font-size:29.80px;line-height:29.80px;color:#ffffff;font-weight:400;font-family:'Liberation Sans', sans-serif;transform:scaleX(1.0321);letter-spacing:0.54px;">17</div>
<div class="t" style="left:2057.2px;top:1751.17px;font-size:29.80px;line-height:29.80px;color:#ffffff;font-weight:400;font-family:'Liberation Sans', sans-serif;transform:scaleX(0.9306);letter-spacing:0.54px;">Ingestion failed. Nu...</div>
<svg style="position:absolute;left:2360px;top:1752.9px;" width="20" height="20" viewBox="0 0 20 20"><rect x="1.5" y="1.5" width="17" height="17" rx="3" fill="none" stroke="#bb36b2" stroke-width="1.8"/><path d="M10 5.5 V14.5 M5.5 10 H14.5" stroke="#bb36b2" stroke-width="1.8"/></svg>
<div class="t" style="left:2394.0px;top:1757.78px;font-size:22.00px;line-height:22.00px;color:#ffffff;font-weight:400;font-family:'Liberation Mono', monospace;transform:scaleX(0.7575);letter-spacing:0.00px;font-style:normal;">{</div>
<div style="position:absolute;left:2414.2px;top:1769.9px;width:5.6px;height:5.6px;background:#f2a03d;border-radius:50%;"></div>
<div style="position:absolute;left:2435.7px;top:1769.9px;width:5.6px;height:5.6px;background:#f2a03d;border-radius:50%;"></div>
<div style="position:absolute;left:2457.2px;top:1769.9px;width:5.6px;height:5.6px;background:#f2a03d;border-radius:50%;"></div>
<div class="t" style="left:2472.0px;top:1757.78px;font-size:22.00px;line-height:22.00px;color:#ffffff;font-weight:400;font-family:'Liberation Mono', monospace;transform:scaleX(0.7575);letter-spacing:0.00px;font-style:normal;">}</div>
<div class="t" style="left:2505.0px;top:1757.35px;font-size:22.50px;line-height:22.50px;color:#a3a3a3;font-weight:400;font-family:'Liberation Mono', monospace;transform:scaleX(0.9734);letter-spacing:0.00px;font-style:italic;">5 items</div>
<div style="position:absolute;left:112px;top:250px;width:2750px;height:1584px;box-sizing:border-box;border:2px solid #4d4d4d;border-top:none;border-radius:0 0 20px 20px;pointer-events:none"></div>
</body></html>
